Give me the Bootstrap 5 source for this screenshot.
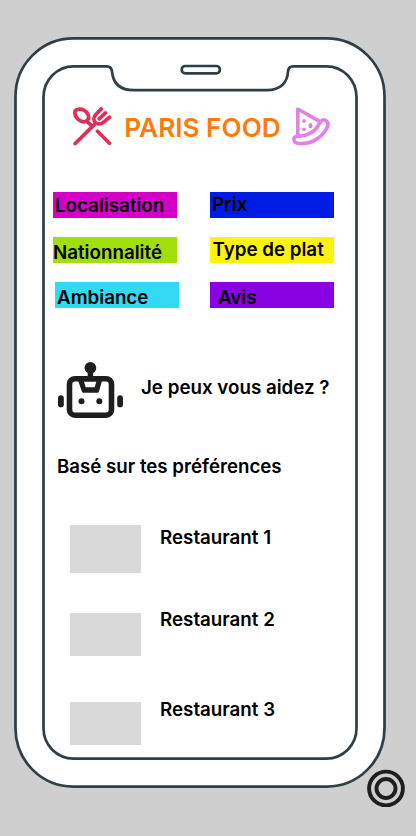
<!DOCTYPE html>
<html lang="fr">
<head>
<meta charset="utf-8">
<meta name="viewport" content="width=device-width, initial-scale=1">
<title>Paris Food</title>
<link href="https://cdn.jsdelivr.net/npm/bootstrap@5.3.0/dist/css/bootstrap.min.css" rel="stylesheet">
<style>
body{background:#cfcfcf;color:#000;font-family:Inter,sans-serif;font-weight:600;font-size:18.75px;line-height:24px}
.stage{width:416px;height:836px}
.screen{padding:107px 82px 0 53px}
.brand{margin-left:20px;width:257px;height:39px}
.brand h1{font-size:26.2px;line-height:32px;font-weight:600;color:#ff7a0a;margin:5px 0 0 1px}
.filters{display:grid;grid-template-columns:124px 124px;grid-auto-rows:26px;gap:19px 33px;margin-top:46px}
.chip{white-space:nowrap;height:26px}
.c-loc{background:#d400c8;padding:2px 0 0 2px}
.c-prix{background:#001be2;padding:1px 0 0 2px}
.c-nat{background:#a0df0c;padding:4px 0 0 0}
.c-plat{background:#fff20c;padding:1px 0 0 2.5px}
.c-amb{background:#31d9f3;padding:4px 0 0 2px;margin:0 -2px 0 2px}
.c-avis{background:#8802e4;padding:4px 0 0 8px}
.assistant{margin:54px 0 0 4px;height:57px}
.assistant p{margin:14px 0 0 17px}
.pref{margin:36px 0 0 4px;line-height:24px;font-size:18.7px}
.resto{margin-left:17px;height:43px}
.resto-1{height:48px;margin-top:46px}
.resto-2{margin-top:40px}
.resto-3{margin-top:46px}
.thumb{width:71px;background:#d9d9d9;margin-right:19px}
.resto-1 .label{margin-top:1px}
.resto-2 .label{margin-top:-5px}
.resto-3 .label{margin-top:-4px}
.cursor-ring{left:367px;top:769px}
</style>
<script src="https://cdn.jsdelivr.net/npm/bootstrap@5.3.0/dist/js/bootstrap.bundle.min.js"></script>
</head>
<body>
<div class="stage position-relative overflow-hidden">
<svg class="position-absolute top-0 start-0" width="416" height="836" fill="#fff" stroke="#303e48" stroke-width="2.7" aria-hidden="true">
<rect x="15.5" y="38.4" width="369" height="748.2" rx="58"/>
<path d="M73.500 66.300H106.500Q111.500 66.300 112 71.500C113 83 120 90.200 134 90.200H267C281 90.200 287.500 82 288 71.500Q288.500 66.300 293 66.300H326.500A30 31 0 0 1 356.500 97V728.500A30 30 0 0 1 326.500 758.600H73.500A30 30 0 0 1 43.500 728.500V97A30 31 0 0 1 73.500 66.300Z"/>
<rect x="181.700" y="66" width="38.200" height="7.300" rx="3.650"/>
</svg>
<main class="screen position-relative">
<header class="brand d-flex justify-content-between align-items-start">
<svg width="39" height="39" viewBox="0 0 39 39" fill="none" stroke="#e12d58" stroke-width="3.700" stroke-linecap="round" stroke-linejoin="round">
<path d="M2.200 36.500 21.500 17.400M24.500 24.300 36.500 36.300M14 14.500 18.300 18.300"/>
<path d="M5 2.300C9 1.400 13.300 3.900 15 7.600C17.200 12.500 12.800 16 8.300 14.300C4 12.800 1.300 8.500 2 4.500Q2.300 2.700 5 2.300Z"/>
<path d="M28.300 1.900 22.600 7.700C20.400 10.300 20.400 13.500 22.400 15.500C24.500 17.500 28 17.400 30.300 15.400L36.600 10.200M26.200 11.800 32.500 5.900"/>
</svg>
<h1>PARIS FOOD</h1>
<svg width="38" height="39" viewBox="0 0 38 39" fill="none" stroke="#e580e8" stroke-width="3.600" stroke-linecap="round" stroke-linejoin="round">
<path d="M5.800 29V2L27.500 14.400"/>
<path d="M5.500 29C14 30 24 24.500 27.200 16.800C28.700 13.300 31.200 12 33.800 13.500C36.500 15.200 36.400 18.200 35 20.800C29 31.700 18.500 37.500 7 36.500C.5 36 .5 29 5.500 29Z"/>
<g fill="#e580e8" stroke="none"><circle cx="12" cy="14" r="1.900"/><circle cx="12" cy="22.300" r="1.900"/><ellipse cx="18.500" cy="18.700" rx="2" ry="2.700"/></g>
</svg>
</header>
<nav class="filters">
<div class="chip c-loc">Localisation</div><div class="chip c-prix">Prix</div>
<div class="chip c-nat">Nationnalité</div><div class="chip c-plat">Type de plat</div>
<div class="chip c-amb">Ambiance</div><div class="chip c-avis">Avis</div>
</nav>
<section class="assistant d-flex align-items-start">
<svg class="flex-shrink-0 overflow-visible" width="67" height="57" viewBox="0 0 67 57" fill="#1e1e1e">
<circle cx="33.400" cy="5.800" r="5.900"/><path d="M30.700 9h5.400v9h-5.400z"/>
<rect x="12.500" y="16.700" width="42" height="36.500" rx="5.500" fill="none" stroke="#1e1e1e" stroke-width="5.600"/>
<path d="M20.500 17H45.500L42 29.500Q41.600 30.700 40.300 30.700H26.500Q25.200 30.700 24.900 29.500Z"/>
<path fill="#fff" d="M27 19.700 28.700 25.300H37.700L39.300 19.700Z"/>
<rect x="1" y="33.300" width="5.800" height="12" rx="2.900"/><rect x="60.200" y="33.300" width="5.800" height="12" rx="2.900"/>
<circle cx="24.500" cy="39.200" r="3"/><circle cx="42.300" cy="39.200" r="3"/>
</svg>
<p class="text-nowrap">Je peux vous aidez ?</p>
</section>
<h2 class="pref fw-semibold">Basé sur tes préférences</h2>
<section>
<div class="resto resto-1 d-flex"><div class="thumb"></div><div class="label">Restaurant 1</div></div>
<div class="resto resto-2 d-flex"><div class="thumb"></div><div class="label">Restaurant 2</div></div>
<div class="resto resto-3 d-flex"><div class="thumb"></div><div class="label">Restaurant 3</div></div>
</section>
</main>
<svg class="cursor-ring position-absolute" width="38" height="38" fill="none" stroke="#1e1e1e" stroke-width="3.900"><circle cx="19" cy="19.500" r="16.900"/><circle cx="19" cy="19.500" r="9.500"/></svg>
</div>
</body>
</html>
